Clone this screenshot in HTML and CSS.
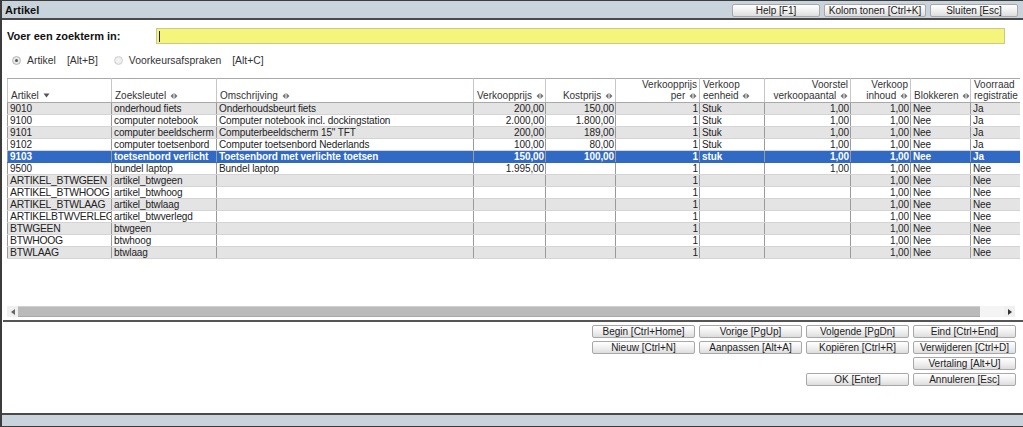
FILE: index.html
```html
<!DOCTYPE html>
<html>
<head>
<meta charset="utf-8">
<link rel="stylesheet" href="styles.css">
</head>
<body>
<div class="window">
  <div class="titlebar">
    <span class="title">Artikel</span>
    <div class="tbtns">
      <button class="btn w88">Help [F1]</button>
      <button class="btn w102">Kolom tonen [Ctrl+K]</button>
      <button class="btn w88">Sluiten [Esc]</button>
    </div>
  </div>
  <div class="search">
    <label class="slabel">Voer een zoekterm in:</label>
    <div class="sinput"><span class="caret"></span></div>
  </div>
  <div class="radios">
    <span class="radio on"></span><span class="rtext">Artikel</span><span class="rkey">[Alt+B]</span>
    <span class="radio off"></span><span class="rtext">Voorkeursafspraken</span><span class="rkey">[Alt+C]</span>
  </div>
  <div class="gridwrap">
    <table class="grid">
      <colgroup>
        <col style="width:104px"><col style="width:105px"><col style="width:257px"><col style="width:72px"><col style="width:70px"><col style="width:84px"><col style="width:65px"><col style="width:86px"><col style="width:60px"><col style="width:60px"><col style="width:70px">
      </colgroup>
      <thead>
        <tr>
          <th>Artikel <svg class="sdown" width="7" height="5" viewBox="0 0 7 5"><path d="M0.5 0.5h6l-3 4z" fill="#555"/></svg></th>
          <th>Zoeksleutel <svg class="si" width="8" height="6" viewBox="0 0 8 6"><path d="M3.5 0v6L0.5 3z M4.5 0v6l3-3z" fill="#777"/></svg></th>
          <th>Omschrijving <svg class="si" width="8" height="6" viewBox="0 0 8 6"><path d="M3.5 0v6L0.5 3z M4.5 0v6l3-3z" fill="#777"/></svg></th>
          <th class="r">Verkoopprijs <svg class="si" width="8" height="6" viewBox="0 0 8 6"><path d="M3.5 0v6L0.5 3z M4.5 0v6l3-3z" fill="#777"/></svg></th>
          <th class="r">Kostprijs <svg class="si" width="8" height="6" viewBox="0 0 8 6"><path d="M3.5 0v6L0.5 3z M4.5 0v6l3-3z" fill="#777"/></svg></th>
          <th class="r">Verkoopprijs<br>per <svg class="si" width="8" height="6" viewBox="0 0 8 6"><path d="M3.5 0v6L0.5 3z M4.5 0v6l3-3z" fill="#777"/></svg></th>
          <th>Verkoop<br>eenheid <svg class="si" width="8" height="6" viewBox="0 0 8 6"><path d="M3.5 0v6L0.5 3z M4.5 0v6l3-3z" fill="#777"/></svg></th>
          <th class="c">Voorstel<br>verkoopaantal <svg class="si" width="8" height="6" viewBox="0 0 8 6"><path d="M3.5 0v6L0.5 3z M4.5 0v6l3-3z" fill="#777"/></svg></th>
          <th class="c">Verkoop<br>inhoud <svg class="si" width="8" height="6" viewBox="0 0 8 6"><path d="M3.5 0v6L0.5 3z M4.5 0v6l3-3z" fill="#777"/></svg></th>
          <th>Blokkeren <svg class="si" width="8" height="6" viewBox="0 0 8 6"><path d="M3.5 0v6L0.5 3z M4.5 0v6l3-3z" fill="#777"/></svg></th>
          <th>Voorraad<br>registratie</th>
        </tr>
      </thead>
      <tbody>
        <tr class="odd"><td>9010</td><td>onderhoud fiets</td><td>Onderhoudsbeurt fiets</td><td class="r">200,00</td><td class="r">150,00</td><td class="r">1</td><td>Stuk</td><td class="r">1,00</td><td class="r">1,00</td><td>Nee</td><td>Ja</td></tr>
        <tr><td>9100</td><td>computer notebook</td><td>Computer notebook incl. dockingstation</td><td class="r">2.000,00</td><td class="r">1.800,00</td><td class="r">1</td><td>Stuk</td><td class="r">1,00</td><td class="r">1,00</td><td>Nee</td><td>Ja</td></tr>
        <tr class="odd"><td>9101</td><td>computer beeldscherm</td><td>Computerbeeldscherm 15" TFT</td><td class="r">200,00</td><td class="r">189,00</td><td class="r">1</td><td>Stuk</td><td class="r">1,00</td><td class="r">1,00</td><td>Nee</td><td>Ja</td></tr>
        <tr><td>9102</td><td>computer toetsenbord</td><td>Computer toetsenbord Nederlands</td><td class="r">100,00</td><td class="r">80,00</td><td class="r">1</td><td>Stuk</td><td class="r">1,00</td><td class="r">1,00</td><td>Nee</td><td>Ja</td></tr>
        <tr class="sel"><td>9103</td><td>toetsenbord verlicht</td><td>Toetsenbord met verlichte toetsen</td><td class="r">150,00</td><td class="r">100,00</td><td class="r">1</td><td>stuk</td><td class="r">1,00</td><td class="r">1,00</td><td>Nee</td><td>Ja</td></tr>
        <tr><td>9500</td><td>bundel laptop</td><td>Bundel laptop</td><td class="r">1.995,00</td><td class="r"></td><td class="r">1</td><td></td><td class="r">1,00</td><td class="r">1,00</td><td>Nee</td><td>Nee</td></tr>
        <tr class="odd"><td class="big">ARTIKEL_BTWGEEN</td><td>artikel_btwgeen</td><td></td><td></td><td></td><td class="r">1</td><td></td><td></td><td class="r">1,00</td><td>Nee</td><td>Nee</td></tr>
        <tr><td class="big">ARTIKEL_BTWHOOG</td><td>artikel_btwhoog</td><td></td><td></td><td></td><td class="r">1</td><td></td><td></td><td class="r">1,00</td><td>Nee</td><td>Nee</td></tr>
        <tr class="odd"><td class="big">ARTIKEL_BTWLAAG</td><td>artikel_btwlaag</td><td></td><td></td><td></td><td class="r">1</td><td></td><td></td><td class="r">1,00</td><td>Nee</td><td>Nee</td></tr>
        <tr><td class="big">ARTIKELBTWVERLEGD</td><td>artikel_btwverlegd</td><td></td><td></td><td></td><td class="r">1</td><td></td><td></td><td class="r">1,00</td><td>Nee</td><td>Nee</td></tr>
        <tr class="odd"><td class="big">BTWGEEN</td><td>btwgeen</td><td></td><td></td><td></td><td class="r">1</td><td></td><td></td><td class="r">1,00</td><td>Nee</td><td>Nee</td></tr>
        <tr><td class="big">BTWHOOG</td><td>btwhoog</td><td></td><td></td><td></td><td class="r">1</td><td></td><td></td><td class="r">1,00</td><td>Nee</td><td>Nee</td></tr>
        <tr class="odd"><td class="big">BTWLAAG</td><td>btwlaag</td><td></td><td></td><td></td><td class="r">1</td><td></td><td></td><td class="r">1,00</td><td>Nee</td><td>Nee</td></tr>
      </tbody>
    </table>
  </div>
  <div class="hscroll">
    <span class="sarrow"><svg width="4" height="6" viewBox="0 0 4 6"><path d="M4 0v6L0 3z" fill="#666"/></svg></span>
    <span class="thumb"></span>
    <span class="track"></span>
    <span class="sarrow"><svg width="4" height="6" viewBox="0 0 4 6"><path d="M0 0v6l4-3z" fill="#333"/></svg></span>
  </div>
  <div class="sep"></div>
  <div class="actions">
    <button class="btn">Begin [Ctrl+Home]</button>
    <button class="btn">Vorige [PgUp]</button>
    <button class="btn">Volgende [PgDn]</button>
    <button class="btn">Eind [Ctrl+End]</button>
    <button class="btn">Nieuw [Ctrl+N]</button>
    <button class="btn">Aanpassen [Alt+A]</button>
    <button class="btn">Kopiëren [Ctrl+R]</button>
    <button class="btn">Verwijderen [Ctrl+D]</button>
    <button class="btn c4">Vertaling [Alt+U]</button>
    <button class="btn c3">OK [Enter]</button>
    <button class="btn c4">Annuleren [Esc]</button>
  </div>
  <div class="footer"></div>
</div>
</body>
</html>
```
FILE: styles.css
```css
* { box-sizing: border-box; }
html, body { margin: 0; padding: 0; }
body {
  width: 1023px;
  height: 427px;
  overflow: hidden;
  background: #fff;
  font-family: "Liberation Sans", Arial, sans-serif;
  font-size: 10px;
  color: #222;
}
.window {
  height: 427px;
  display: flex;
  flex-direction: column;
  border-left: 2px solid #3c3c3c;
  border-top: 1px solid #3c3c3c;
}
.titlebar {
  height: 19px;
  flex: none;
  background: #c9d3db;
  border-bottom: 2px solid #4a4a4a;
  display: flex;
  align-items: center;
  justify-content: space-between;
  padding: 0 5px 0 3px;
}
.title { font-weight: bold; font-size: 11px; color: #111; }
.tbtns { display: flex; gap: 4px; padding-top: 1px; }
.btn {
  height: 13px;
  padding: 0;
  margin: 0;
  border: 1px solid #a8a8a8;
  border-radius: 2px;
  background: linear-gradient(#ffffff, #efefef 55%, #dddddd);
  font-family: "Liberation Sans", Arial, sans-serif;
  font-size: 10px;
  line-height: 11px;
  color: #222;
  text-align: center;
  white-space: nowrap;
  overflow: hidden;
}
.w88 { width: 88px; }
.w102 { width: 102px; }
.search {
  display: flex;
  align-items: center;
  padding: 8px 0 0 5px;
  height: 24px;
  flex: none;
}
.slabel { width: 149px; font-weight: bold; font-size: 11px; color: #111; }
.sinput {
  width: 849px;
  height: 16px;
  background: #f5f57c;
  border: 1px solid #c9c98a;
  display: flex;
  align-items: center;
  padding-left: 2px;
}
.caret { width: 1px; height: 11px; background: #222; }
.radios {
  display: flex;
  align-items: center;
  height: 12px;
  margin-top: 10px;
  padding-left: 10px;
  flex: none;
  color: #333;
  font-size: 10.4px;
}
.radio {
  width: 9px;
  height: 9px;
  border-radius: 50%;
  border: 1px solid #b5b5b5;
  background: radial-gradient(circle, #f4f4f4, #dcdcdc);
  position: relative;
  margin-right: 6px;
}
.radio.on::after {
  content: "";
  position: absolute;
  left: 2px; top: 2px;
  width: 3px; height: 3px;
  border-radius: 50%;
  background: #555;
}
.radio.off { border-color: #d0d0d0; background: radial-gradient(circle, #f6f6f6, #e6e6e6); }
.rtext { margin-right: 11px; }
.rkey { margin-right: 16px; }
.gridwrap {
  margin: 12px 3px 0 5px;
  height: 226px;
  flex: none;
  overflow: hidden;
}
.grid {
  table-layout: fixed;
  border-collapse: collapse;
  width: 1033px;
}
.grid th {
  height: 24px;
  padding: 0 2px 1px 3px;
  font-weight: normal;
  text-align: left;
  vertical-align: bottom;
  line-height: 11px;
  color: #333;
  background: #fff;
  border-top: 1px solid #a9a9a9;
  border-left: 1px solid #c6c6c6;
  border-right: 1px solid #c6c6c6;
  border-bottom: 1px solid #a9a9a9;
  white-space: nowrap;
  overflow: hidden;
}
.grid th.r { text-align: right; }
.grid th.c { text-align: right; }
.si { vertical-align: 0; margin-left: 1px; }
.sdown { vertical-align: 1px; margin-left: 1px; }
.grid td {
  height: 12px;
  line-height: 11px;
  padding: 0 1px 0 2px;
  border-left: 1px solid #9a9a9a;
  border-right: 1px solid #9a9a9a;
  border-bottom: 1px solid #d4d4d4;
  white-space: nowrap;
  overflow: hidden;
  color: #222;
  letter-spacing: -0.1px;
}
.grid td.r { text-align: right; }
.grid td.big { font-size: 10.4px; letter-spacing: -0.3px; }
.grid tr.odd td { background: #e4e4e4; }
.grid tr.sel td { background: #316ac5; color: #fff; font-weight: bold; border-bottom-color: #316ac5; }
.hscroll {
  display: flex;
  height: 11px;
  margin: 2px 8px 0 5px;
  flex: none;
  background: #f2f2f2;
}
.sarrow {
  width: 11px;
  height: 11px;
  display: flex;
  align-items: center;
  justify-content: center;
  background: #f0f0f0;
}
.thumb { width: 962px; background: #bababa; border-top: 1px solid #cfcfcf; border-bottom: 1px solid #a9a9a9; }
.track { flex: 1; background: #f4f4f4; }
.sep {
  height: 2px;
  flex: none;
  margin: 3px 0 0 1px;
  background: #555;
}
.actions {
  flex: 1;
  display: grid;
  grid-template-columns: repeat(4, 103px);
  grid-auto-rows: 13px;
  column-gap: 4px;
  row-gap: 3px;
  justify-content: end;
  align-content: start;
  padding: 3px 7px 0 0;
}
.c4 { grid-column: 4; }
.c3 { grid-column: 3; }
.footer {
  height: 14px;
  flex: none;
  background: #c9d3db;
  border-top: 2px solid #4a4a4a;
  border-bottom: 1px solid #3c3c3c;
}
```
